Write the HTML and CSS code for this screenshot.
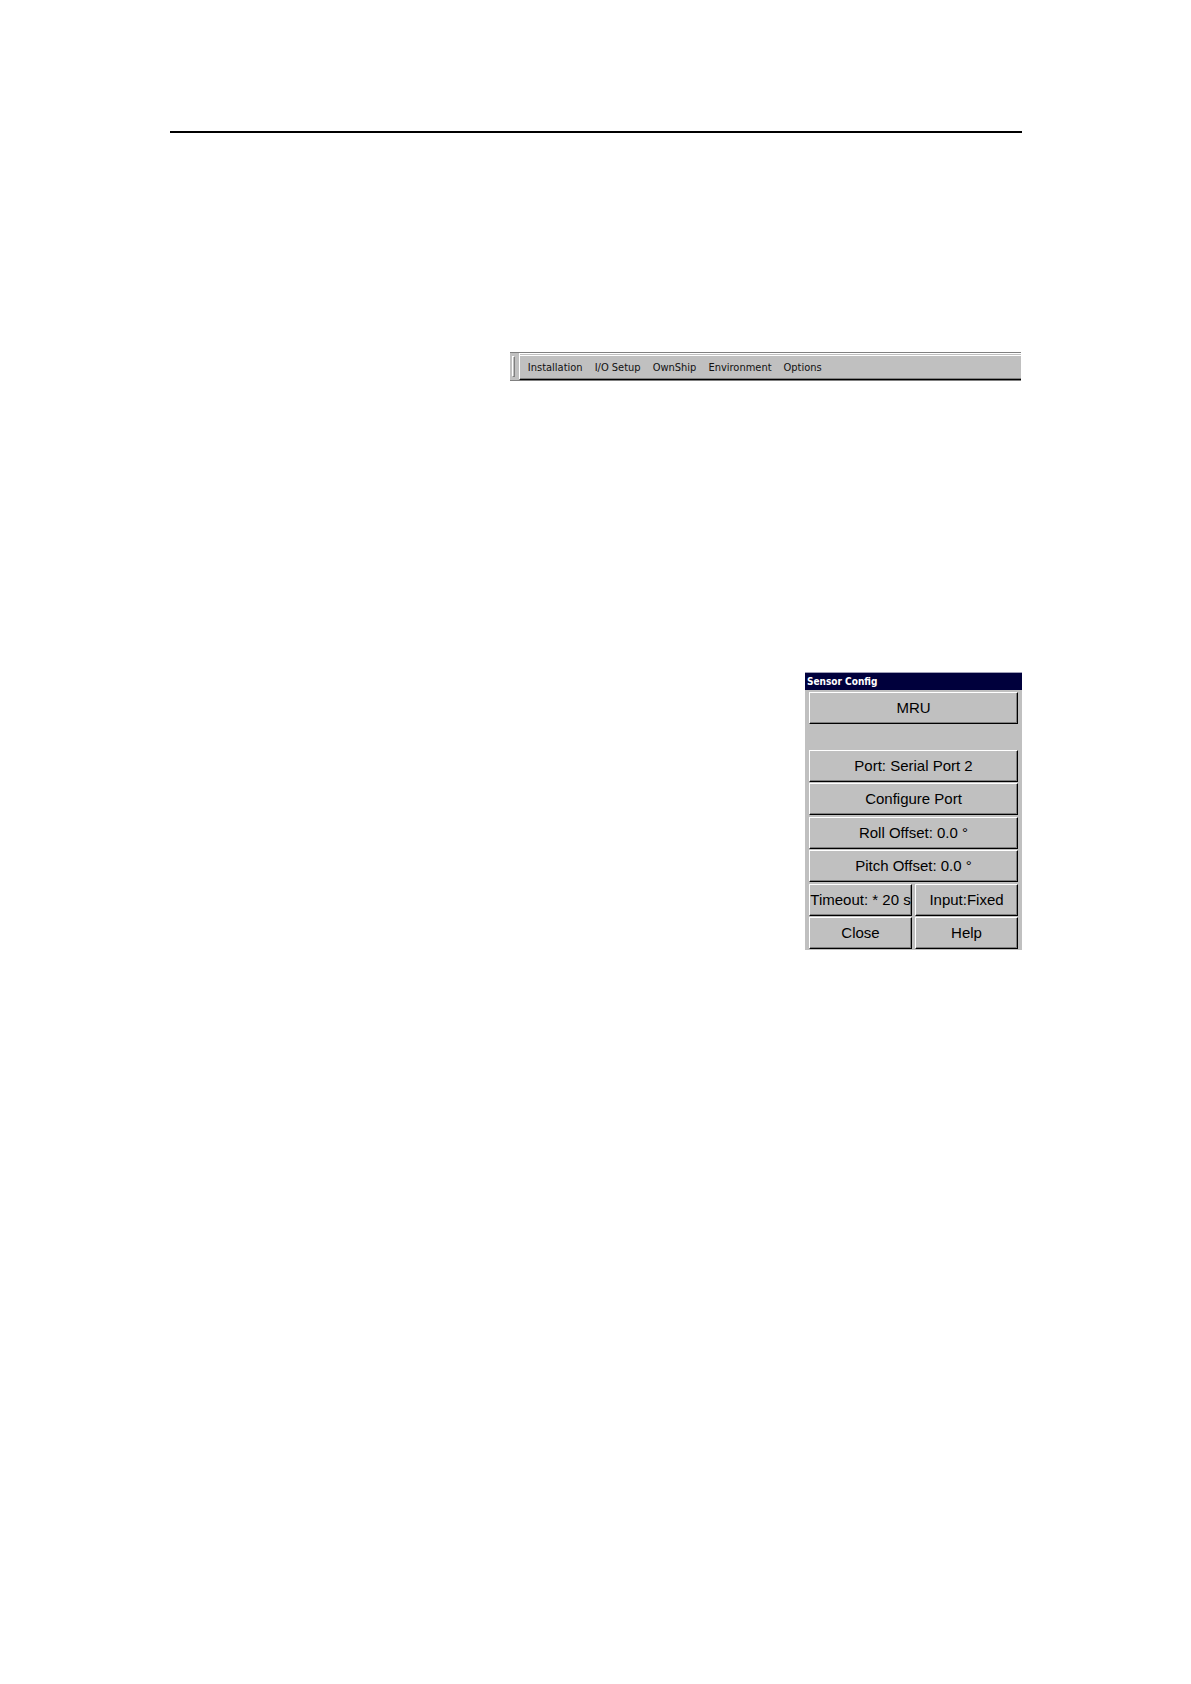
FILE: index.html
```
<!DOCTYPE html>
<html lang="en">
<head>
<meta charset="utf-8">
<meta name="viewport" content="width=device-width, initial-scale=1">
<title>Sensor Config</title>
<link rel="stylesheet" href="styles.css">
</head>
<body>
<main class="page">
  <hr class="rule">
  <nav class="toolbar" aria-label="Main menu">
    <span class="grip"></span>
    <div class="menu">
      <button type="button">Installation</button>
      <button type="button">I/O Setup</button>
      <button type="button">OwnShip</button>
      <button type="button">Environment</button>
      <button type="button">Options</button>
    </div>
  </nav>
  <section class="dialog" aria-labelledby="dialog-title">
    <h1 class="title" id="dialog-title">Sensor Config</h1>
    <div class="body">
      <button class="key" type="button">MRU</button>
      <div class="settings">
        <div class="group">
          <button class="key" type="button">Port: Serial Port 2</button>
          <button class="key" type="button">Configure Port</button>
        </div>
        <div class="group">
          <button class="key" type="button">Roll Offset: 0.0 °</button>
          <button class="key" type="button">Pitch Offset: 0.0 °</button>
        </div>
        <div class="group pairs">
          <button class="key" type="button">Timeout: * 20 s</button>
          <button class="key" type="button">Input:Fixed</button>
          <button class="key" type="button">Close</button>
          <button class="key" type="button">Help</button>
        </div>
      </div>
    </div>
  </section>
</main>
</body>
</html>
```
FILE: styles.css
```
* { box-sizing: border-box; }

body {
  margin: 0;
  background: #fff;
  color: #000;
  font-family: "DejaVu Sans Condensed", "DejaVu Sans", sans-serif;
}

button {
  margin: 0;
  padding: 0;
  border: 0;
  background: none;
  color: inherit;
  font: inherit;
  white-space: nowrap;
}

.page {
  display: flex;
  flex-direction: column;
  align-items: flex-end;
  padding: 131px 169px 80px 170px;
}

.rule {
  width: 100%;
  height: 2px;
  margin: 0;
  border: 0;
  background: #000;
}

.toolbar {
  display: flex;
  width: 60%;
  margin: 219px 1px 0 0;
  border-top: 1px solid #808080;
  border-bottom: 1px solid #808080;
  background: #c0c0c0;
}

.grip {
  width: 3px;
  margin: 3px 4px 3px 2px;
  border: 1px solid #808080;
  border-color: #fff #808080 #808080 #fff;
}

.menu {
  display: flex;
  flex: 1;
  gap: 12px;
  height: 27px;
  padding: 0 0 1px 8px;
  border-top: 3px double #fff;
  border-left: 1px solid #fff;
  border-bottom: 1px solid #000;
  box-shadow: inset 0 -1px #808080;
  color: #111;
  font-size: 11px;
}

.dialog {
  width: 217px;
  margin-top: 291px;
  background: #c0c0c0;
}

.title {
  margin: 0;
  padding: 0 2px;
  border-top: 1px solid #a0a0b8;
  background: #00003c;
  color: #fff;
  font-size: 10px;
  font-weight: bold;
  line-height: 17px;
}

.body { padding: 2px 4px 1px; }

.key {
  display: block;
  width: 100%;
  height: 32px;
  padding-bottom: 2px;
  border: 1px solid;
  border-color: #fff #000 #000 #fff;
  background: #c0c0c0;
  box-shadow: inset -1px -1px #808080;
  font-family: "Liberation Sans", Arial, sans-serif;
  font-size: 15px;
}

.settings {
  display: grid;
  gap: 2px;
  margin-top: 26px;
}

.group {
  display: grid;
  gap: 1px;
}

.pairs {
  grid-template-columns: repeat(2, minmax(0, 1fr));
  column-gap: 3px;
}
```
